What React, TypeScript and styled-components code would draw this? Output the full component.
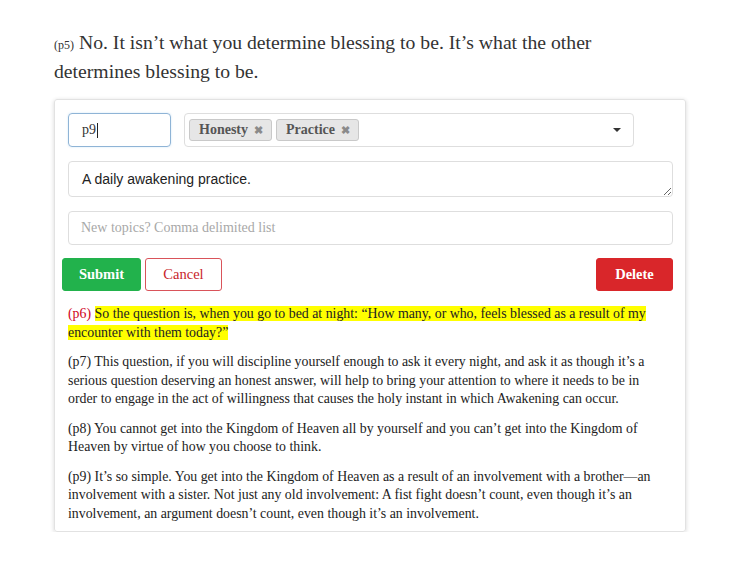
import React from "react";
import styled, { createGlobalStyle } from "styled-components";

const Global = createGlobalStyle`
  html, body { margin: 0; padding: 0; background: #fff; }
  body { font-family: "Liberation Serif", "DejaVu Serif", serif; color: #222; }
  * { box-sizing: border-box; }
`;

const Page = styled.div`
  width: 632px;
  margin-left: 54px;
  padding-top: 28px;
`;

const Lead = styled.p`
  margin: 0 0 13px;
  max-width: 600px;
  font-size: 19.7px;
  line-height: 29px;
  color: #333;
`;

const Num = styled.span<{ $red?: boolean }>`
  font-size: ${(p) => (p.$red ? "inherit" : "12px")};
  line-height: 1;
  color: ${(p) => (p.$red ? "#d0021b" : "inherit")};
`;

const Card = styled.div`
  border: 1px solid #e2e2e2;
  border-radius: 3px;
  box-shadow: 0 1px 4px rgba(0, 0, 0, 0.16);
  padding: 13px 12px 8px 13px;
`;

const TopRow = styled.div`
  display: flex;
  gap: 13px;
  margin-right: 39px;
`;

const FakeInput = styled.div`
  width: 103px;
  height: 34px;
  border: 1px solid #8fb4d6;
  border-radius: 4px;
  box-shadow: 0 0 2px rgba(102, 175, 233, 0.35);
  padding: 0 13px;
  display: flex;
  align-items: center;
  font-size: 14px;
  color: #333;
`;

const Caret = styled.span`
  display: inline-block;
  width: 1px;
  height: 15px;
  background: #222;
  margin-left: 1px;
`;

const Select = styled.div`
  flex: 1;
  height: 34px;
  border: 1px solid #dedede;
  border-radius: 4px;
  display: flex;
  align-items: center;
  padding: 0 12px 0 4px;
  gap: 4px;
`;

const Tag = styled.span`
  display: inline-flex;
  align-items: center;
  gap: 6px;
  height: 22px;
  padding: 0 8px 0 9px;
  background: #e6e6e6;
  border: 1px solid #c9c9c9;
  border-radius: 3px;
  font-weight: bold;
  font-size: 14px;
  color: #555;
`;

const X = styled.span`
  font-size: 11px;
  color: #8a8a8a;
`;

const Arrow = styled.span`
  margin-left: auto;
  width: 0;
  height: 0;
  border-left: 4px solid transparent;
  border-right: 4px solid transparent;
  border-top: 4px solid #333;
`;

const TextArea = styled.textarea`
  display: block;
  width: 100%;
  height: 36px;
  margin-top: 14px;
  border: 1px solid #dedede;
  border-radius: 4px;
  padding: 9px 13px;
  font-family: "Liberation Sans", Arial, sans-serif;
  font-size: 14px;
  color: #222;
  resize: vertical;
  outline: none;
`;

const TextInput = styled.input`
  display: block;
  width: 100%;
  height: 34px;
  margin-top: 14px;
  border: 1px solid #dedede;
  border-radius: 4px;
  padding: 0 12px;
  font-family: "Liberation Serif", serif;
  font-size: 14px;
  outline: none;
  &::placeholder { color: #a8a8a8; }
`;

const Buttons = styled.div`
  display: flex;
  gap: 4px;
  margin: 13px 0 0 -6px;
`;

const Btn = styled.button<{ $kind: "submit" | "cancel" | "delete" }>`
  height: 33px;
  border-radius: 3px;
  font-family: "Liberation Serif", serif;
  font-size: 14.5px;
  font-weight: ${(p) => (p.$kind === "cancel" ? "normal" : "bold")};
  padding: 0;
  width: ${(p) => (p.$kind === "submit" ? "79px" : "77px")};
  background: ${(p) =>
    p.$kind === "submit" ? "#22b24c" : p.$kind === "delete" ? "#d9262a" : "#fff"};
  color: ${(p) => (p.$kind === "cancel" ? "#c8242a" : "#fff")};
  border: 1px solid
    ${(p) =>
      p.$kind === "submit" ? "#22b24c" : p.$kind === "delete" ? "#d9262a" : "#d9535a"};
  margin-left: ${(p) => (p.$kind === "delete" ? "auto" : "0")};
`;

const Body = styled.div`
  margin-top: 14px;
  padding-right: 20px;
`;

const Para = styled.p`
  margin: 0 0 11px;
  font-size: 13.85px;
  line-height: 18.5px;
  color: #222;
  &:last-child { margin-bottom: 0; }
`;

const Mark = styled.span`
  background: #ffff00;
`;

export default function App() {
  return (
    <>
      <Global />
      <Page>
        <Lead>
          <Num>(p5)</Num> No. It isn’t what you determine blessing to be. It’s what the other
          determines blessing to be.
        </Lead>
        <Card>
          <TopRow>
            <FakeInput>
              p9
              <Caret />
            </FakeInput>
            <Select>
              <Tag>
                Honesty <X>✖</X>
              </Tag>
              <Tag>
                Practice <X>✖</X>
              </Tag>
              <Arrow />
            </Select>
          </TopRow>
          <TextArea defaultValue="A daily awakening practice." />
          <TextInput placeholder="New topics? Comma delimited list" />
          <Buttons>
            <Btn $kind="submit">Submit</Btn>
            <Btn $kind="cancel">Cancel</Btn>
            <Btn $kind="delete">Delete</Btn>
          </Buttons>
          <Body>
            <Para>
              <Num $red>(p6)</Num>{" "}
              <Mark>
                So the question is, when you go to bed at night: “How many, or who, feels blessed as
                a result of my encounter with them today?”
              </Mark>
            </Para>
            <Para>
              (p7) This question, if you will discipline yourself enough to ask it every night, and
              ask it as though it’s a serious question deserving an honest answer, will help to bring
              your attention to where it needs to be in order to engage in the act of willingness that
              causes the holy instant in which Awakening can occur.
            </Para>
            <Para>
              (p8) You cannot get into the Kingdom of Heaven all by yourself and you can’t get into
              the Kingdom of Heaven by virtue of how you choose to think.
            </Para>
            <Para>
              (p9) It’s so simple. You get into the Kingdom of Heaven as a result of an involvement
              with a brother—an involvement with a sister. Not just any old involvement: A fist fight
              doesn’t count, even though it’s an involvement, an argument doesn’t count, even though
              it’s an involvement.
            </Para>
          </Body>
        </Card>
      </Page>
    </>
  );
}
